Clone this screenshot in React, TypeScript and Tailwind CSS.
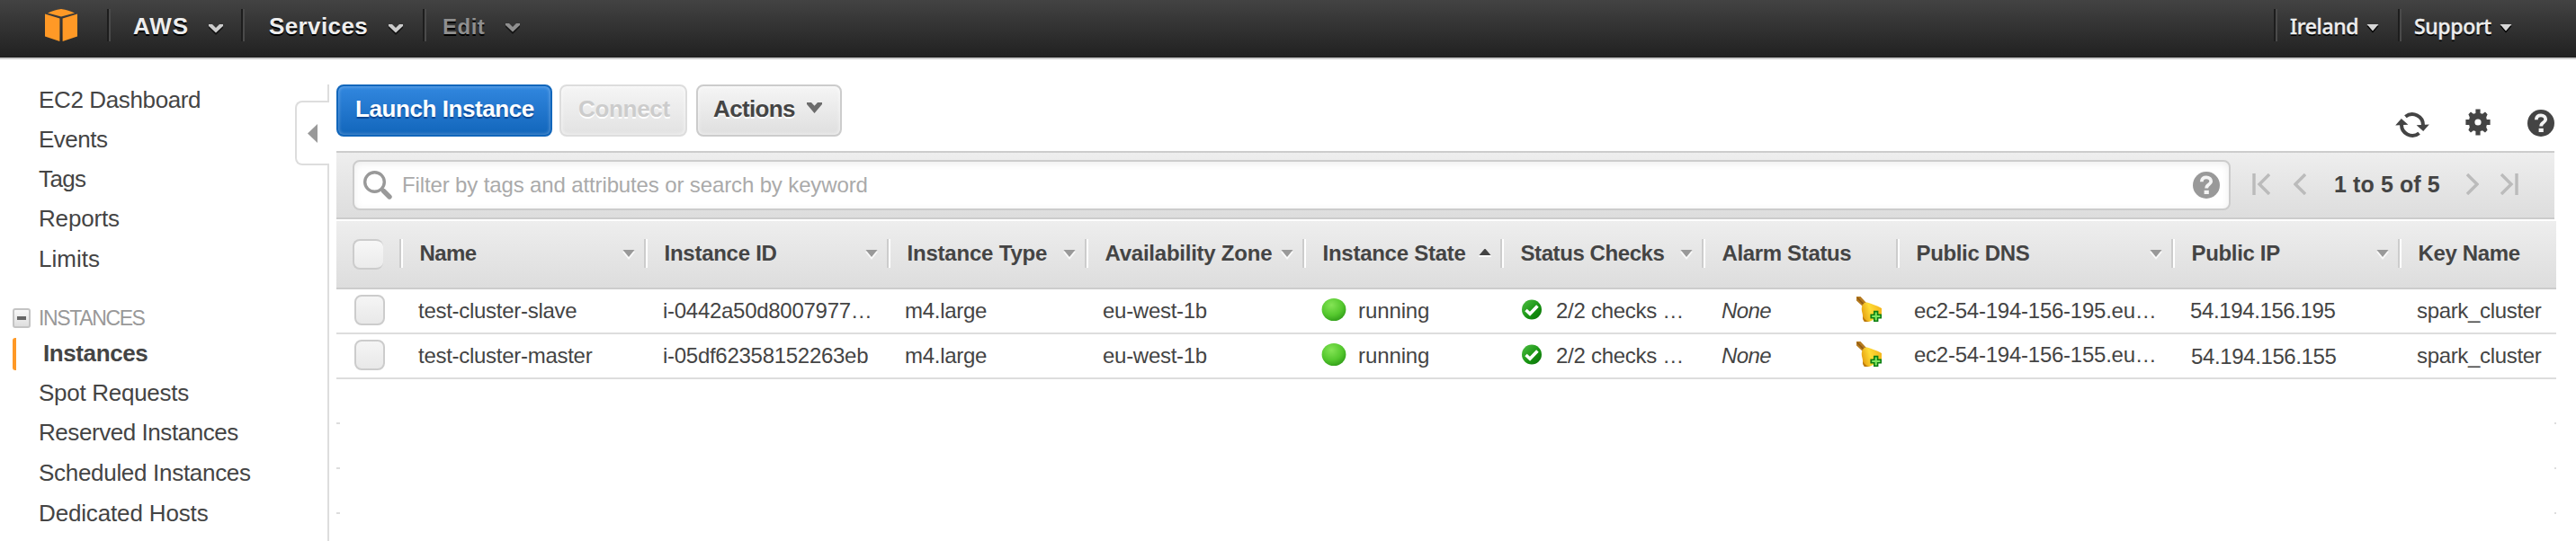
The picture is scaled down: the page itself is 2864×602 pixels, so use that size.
import type { ReactNode } from "react";

type Column = {
  label: string;
  width: string;
  tracking: string;
  sort?: "down" | "up";
};

const columns: Column[] = [
  { label: "Name", width: "w-[272px]", tracking: "tracking-[-0.6px]", sort: "down" },
  { label: "Instance ID", width: "w-[270px]", tracking: "tracking-[-0.26px]", sort: "down" },
  { label: "Instance Type", width: "w-[220px]", tracking: "tracking-[-0.2px]", sort: "down" },
  { label: "Availability Zone", width: "w-[242px]", tracking: "tracking-[-0.24px]", sort: "down" },
  { label: "Instance State", width: "w-[220px]", tracking: "tracking-[-0.26px]", sort: "up" },
  { label: "Status Checks", width: "w-[224px]", tracking: "tracking-[-0.42px]", sort: "down" },
  { label: "Alarm Status", width: "w-[216px]", tracking: "tracking-[-0.35px]" },
  { label: "Public DNS", width: "w-[306px]", tracking: "tracking-[-0.35px]", sort: "down" },
  { label: "Public IP", width: "w-[252px]", tracking: "tracking-[-0.33px]", sort: "down" },
  { label: "Key Name", width: "w-[176px]", tracking: "tracking-[-0.36px]" },
];

const instances = [
  {
    name: "test-cluster-slave",
    id: "i-0442a50d8007977…",
    dns: "ec2-54-194-156-195.eu…",
    ip: "54.194.156.195",
    keyName: "spark_cluster",
    dnsPad: "pb-0",
    ipPad: "pt-0 pl-[21px]",
  },
  {
    name: "test-cluster-master",
    id: "i-05df62358152263eb",
    dns: "ec2-54-194-156-155.eu…",
    ip: "54.194.156.155",
    keyName: "spark_cluster",
    dnsPad: "pb-[2px]",
    ipPad: "pt-[2px] pl-[22px]",
  },
];

function Logo() {
  return (
    <svg width="36" height="36" viewBox="0 0 36 36" fill="#ff9926">
      <path d="M3 4.4 C8 2.4 12 .6 18 0 C24 .6 28 2.4 33 4.4 L18 8.6 Z" />
      <path d="M0 5.6 L16.4 10.6 V36 L0 30.6 Z" />
      <path d="M36 5.6 L19.6 10.6 V36 L36 30.6 Z" />
    </svg>
  );
}

function Chevron({ color }: { color: string }) {
  return (
    <svg width="16" height="12" viewBox="0 0 16 12">
      <path d="M0 2 H4 L8 6 L12 2 H16 V4 L8 12 L0 4 Z" fill="#000" opacity=".6" />
      <path d="M0 0 H4 L8 4 L12 0 H16 V2 L8 9.5 L0 2 Z" fill={color} />
    </svg>
  );
}

function NavDivider() {
  return <div className="mt-[10px] h-9 w-1 shrink-0 border-l-2 border-r-2 border-l-[#1d1d1d] border-r-[#4a4a4a]" />;
}

function Caret() {
  return (
    <svg width="14" height="10" viewBox="0 0 14 10">
      <path d="M0.5 2 H13.5 L7 9.5 Z" fill="#000" />
      <path d="M0.5 0 H13.5 L7 7.5 Z" fill="#d6d6d6" />
    </svg>
  );
}

function TopBar() {
  return (
    <header className="flex h-[66px] items-start border-b-2 border-[#ccc] bg-linear-to-b from-[#434343] to-[#212121] font-['Liberation_Sans',Arial,sans-serif] text-[26px] leading-[38px] font-bold text-[#eee]">
      <div className="ml-[50px] mt-[10px]"><Logo /></div>
      <div className="ml-[33px]"><NavDivider /></div>
      <span className="ml-[25px] mt-[10px] w-[63px] whitespace-nowrap tracking-[0.9px] [text-shadow:0_2px_0_#000]">AWS</span>
      <div className="ml-[21px] mt-[27px]"><Chevron color="#ccc" /></div>
      <div className="ml-[20px]"><NavDivider /></div>
      <span className="ml-[27px] mt-[10px] w-[112px] whitespace-nowrap tracking-[0.4px] [text-shadow:0_2px_0_#000]">Services</span>
      <div className="ml-[21px] mt-[27px]"><Chevron color="#ccc" /></div>
      <div className="ml-[22px]"><NavDivider /></div>
      <span className="ml-[18px] mt-[11px] w-[49px] whitespace-nowrap text-[24px] tracking-[0.5px] text-[#8f8f8f] [text-shadow:0_2px_0_#000]">Edit</span>
      <div className="ml-[21px] mt-[26px]"><Chevron color="#8f8f8f" /></div>
      <div className="flex-1" />
      <div><NavDivider /></div>
      <div className="flex h-[64px] w-[134px] items-start pl-[14px] font-['Noto_Sans',sans-serif] text-[23px] font-medium">
        <span className="mt-[10px] w-[85px] whitespace-nowrap tracking-[-0.35px] [-webkit-text-stroke:0.4px_#eee] [text-shadow:0_2px_0_#000]">Ireland</span>
        <div className="mt-[27px]"><Caret /></div>
      </div>
      <NavDivider />
      <div className="flex h-[64px] w-[194px] items-start pl-[14px] font-['Noto_Sans',sans-serif] text-[23px] font-medium">
        <span className="mt-[10px] w-[95px] whitespace-nowrap tracking-[-0.35px] [-webkit-text-stroke:0.4px_#eee] [text-shadow:0_2px_0_#000]">Support</span>
        <div className="mt-[27px]"><Caret /></div>
      </div>
    </header>
  );
}

function NavItem({ tracking, height = "h-11", children }: { tracking: string; height?: string; children: ReactNode }) {
  return <a className={`flex items-center whitespace-nowrap pl-[43px] ${height} ${tracking}`}>{children}</a>;
}

function Sidebar() {
  return (
    <aside className="flex w-[374px] shrink-0 font-['Liberation_Sans',Arial,sans-serif] text-[26px] leading-[30px] text-[#444]">
      <nav className="w-[328px] pt-[23px]">
        <NavItem tracking="tracking-[-0.37px]">EC2 Dashboard</NavItem>
        <NavItem tracking="tracking-[-0.5px]">Events</NavItem>
        <NavItem tracking="tracking-[-0.6px]">Tags</NavItem>
        <NavItem tracking="tracking-[-0.17px]">Reports</NavItem>
        <NavItem tracking="tracking-[0px]" height="h-[46px]">Limits</NavItem>
        <div className="mt-[21px] flex h-11 items-center whitespace-nowrap pl-[14px] text-[23px] tracking-[-1.37px] text-[#999]">
          <span className="mr-[9px] flex h-[22px] w-5 items-center justify-center rounded-[3px] border-2 border-[#c4c4c4] bg-linear-to-b from-[#f8f8f8] to-[#dedede]">
            <span className="h-1 w-[10px] bg-[#666]" />
          </span>
          INSTANCES
        </div>
        <div className="flex h-9 pl-[14px]">
          <span className="w-1 rounded-l-[3px] bg-[#ff9926]" />
          <span className="pl-[30px] font-bold leading-[34px] tracking-[-0.4px]">Instances</span>
        </div>
        <div className="h-[3px]" />
        <NavItem tracking="tracking-[-0.28px]">Spot Requests</NavItem>
        <NavItem tracking="tracking-[-0.44px]">Reserved Instances</NavItem>
        <NavItem tracking="tracking-[-0.3px]" height="h-[46px]">Scheduled Instances</NavItem>
        <NavItem tracking="tracking-[-0.15px]">Dedicated Hosts</NavItem>
      </nav>
      <div className="flex w-[38px] flex-col pt-[28px]">
        <span className="h-[18px] w-[2px] self-end bg-[#ddd]" />
        <div className="flex h-[72px] items-center rounded-l-[8px] border-2 border-r-0 border-[#ddd] pl-[12px]">
          <svg width="11" height="21" viewBox="0 0 11 21"><path d="M11 0 V21 L0 10.5 Z" fill="#999" /></svg>
        </div>
        <span className="w-[2px] flex-1 self-end bg-[#ddd]" />
      </div>
    </aside>
  );
}

function RefreshIcon() {
  return (
    <svg width="38" height="30" viewBox="-19 -15 38 30">
      <path d="M-7.6 -9.2 A12 12 0 0 1 11.9 1" fill="none" stroke="#444" strokeWidth="4" />
      <path d="M4.6 .2 L18.8 -.4 L12.2 7 Z" fill="#444" />
      <path d="M7.6 9.2 A12 12 0 0 1 -11.9 -1" fill="none" stroke="#444" strokeWidth="4" />
      <path d="M-4.6 -.2 L-18.8 .4 L-12.2 -7 Z" fill="#444" />
    </svg>
  );
}

function GearIcon() {
  return (
    <svg width="28" height="30" viewBox="-14 -15 28 30" fill="#444">
      <path
        fillRule="evenodd"
        d="M-2.6 -14.5 H2.6 V-10 L5 -9.2 L8 -11.4 L10.6 -8.8 L9.2 -5.4 L9.8 -3 H13.6 V3 H9.8 L9.2 5.4 L10.6 8.8 L8 11.4 L5 9.2 L2.6 10 V14.5 H-2.6 V10 L-5 9.2 L-8 11.4 L-10.6 8.8 L-9.2 5.4 L-9.8 3 H-13.6 V-3 H-9.8 L-9.2 -5.4 L-10.6 -8.8 L-8 -11.4 L-5 -9.2 L-2.6 -10 Z M0 -3.6 A3.6 3.6 0 1 0 0 3.6 A3.6 3.6 0 1 0 0 -3.6 Z"
      />
    </svg>
  );
}

function HelpIcon({ color }: { color: string }) {
  return (
    <svg width="30" height="30" viewBox="0 0 30 30">
      <circle cx="15" cy="15" r="15" fill={color} />
      <path d="M9.8 11.2 C9.8 7.6 12 6.4 15 6.4 C18.2 6.4 20.2 8.2 20.2 10.8 C20.2 14.6 15.2 14 15.2 18.4" fill="none" stroke="#f4f4f4" strokeWidth="3.8" />
      <rect x="12.6" y="20.8" width="5.2" height="4.2" fill="#f4f4f4" />
    </svg>
  );
}

function Actions() {
  return (
    <div className="flex h-[102px] items-start pt-[28px] font-['Liberation_Sans',Arial,sans-serif] text-[26px] leading-[30px] font-bold">
      <button className="h-[58px] w-[240px] whitespace-nowrap rounded-[8px] border-2 border-[#1166bb] bg-linear-to-b from-[#3187df] to-[#1166bb] pb-1 pl-[19px] text-left tracking-[-0.42px] text-white shadow-[inset_0_0_4px_rgba(255,255,255,0.4)] [text-shadow:0_2px_1px_rgba(0,40,110,0.6)]">
        Launch Instance
      </button>
      <button className="ml-2 h-[58px] w-[142px] whitespace-nowrap rounded-[8px] border-2 border-[#ddd] bg-linear-to-b from-[#f5f5f5] to-[#e2e2e2] pb-1 pl-[19px] text-left tracking-[-0.31px] text-[#ccc] shadow-[inset_0_0_4px_rgba(255,255,255,0.8)] [text-shadow:0_2px_0_#fff]">
        Connect
      </button>
      <button className="ml-[10px] flex h-[58px] w-[162px] items-center whitespace-nowrap rounded-[8px] border-2 border-[#ccc] bg-linear-to-b from-[#f5f5f5] to-[#dfdfdf] pb-1 pl-[17px] tracking-[-0.65px] text-[#444] shadow-[inset_0_0_4px_rgba(255,255,255,0.8)] [text-shadow:0_2px_0_#fff]">
        <span className="w-[104px] text-left">Actions</span>
        <svg width="17" height="12" viewBox="0 0 17 12" className="mb-[2px]">
          <path d="M0 0 H5 L8.5 3.8 L12 0 H17 V2 L8.5 12 L0 2 Z" fill="#6c6c6c" />
        </svg>
      </button>
      <div className="ml-auto flex items-start pr-[24px]">
        <div className="mt-[30px]"><RefreshIcon /></div>
        <div className="ml-[40px] mt-[27px]"><GearIcon /></div>
        <div className="ml-[41px] mt-[28px]"><HelpIcon color="#444" /></div>
      </div>
    </div>
  );
}

function FilterBar() {
  return (
    <div className="flex h-[76px] w-[2466px] items-start border-y-2 border-[#ccc] bg-linear-to-b from-[#eee] to-[#ddd] font-['Liberation_Sans',Arial,sans-serif]">
      <div className="ml-[18px] mt-2 flex h-14 w-[2088px] items-center rounded-[8px] border-2 border-[#ccc] bg-white pl-[10px] pr-[10px] shadow-[inset_0_2px_8px_rgba(0,0,0,0.08)]">
        <svg width="32" height="32" viewBox="0 0 32 32" fill="none" stroke="#999">
          <circle cx="12.5" cy="12.5" r="10.8" strokeWidth="3.4" />
          <path d="M20 20 L23 23" strokeWidth="4" />
          <path d="M22.5 22.5 L29 29" strokeWidth="5.4" strokeLinecap="round" />
        </svg>
        <span className="ml-[11px] whitespace-nowrap text-[24px] leading-[28px] tracking-[-0.13px] text-[#aaa]">
          Filter by tags and attributes or search by keyword
        </span>
        <div className="ml-auto"><HelpIcon color="#999" /></div>
      </div>
      <div className="flex h-[72px] items-center pb-[2px] text-[#444]">
        <svg width="20" height="24" viewBox="0 0 20 24" className="ml-6" fill="none" stroke="#bbb" strokeWidth="3.4">
          <path d="M2 0 V24" /><path d="M19 1 L8 12 L19 23" />
        </svg>
        <svg width="14" height="24" viewBox="0 0 14 24" className="ml-[26px]" fill="none" stroke="#bbb" strokeWidth="3.4">
          <path d="M13 1 L2 12 L13 23" />
        </svg>
        <span className="ml-[31px] w-[147px] whitespace-nowrap text-[25px] leading-[28px] font-bold tracking-[0.1px]">1 to 5 of 5</span>
        <svg width="14" height="24" viewBox="0 0 14 24" fill="none" stroke="#bbb" strokeWidth="3.4">
          <path d="M1 1 L12 12 L1 23" />
        </svg>
        <svg width="20" height="24" viewBox="0 0 20 24" className="ml-[24px]" fill="none" stroke="#bbb" strokeWidth="3.4">
          <path d="M18 0 V24" /><path d="M1 1 L12 12 L1 23" />
        </svg>
      </div>
    </div>
  );
}

function SortArrow({ dir }: { dir: "down" | "up" }) {
  return dir === "down" ? (
    <svg width="14" height="12" viewBox="0 0 14 12">
      <path d="M0 2 H14 L7 11 Z" fill="#fafafa" />
      <path d="M.5 0 H13.5 L7 8 Z" fill="#999" />
    </svg>
  ) : (
    <svg width="14" height="12" viewBox="0 0 14 12">
      <path d="M0 8 L7 0 L14 8 V9 H0 Z" fill="#fafafa" />
      <path d="M.5 7 H13.5 L7 -.6 Z" fill="#444" />
    </svg>
  );
}

function HeaderRow() {
  return (
    <div className="mt-[2px] flex h-[76px] w-[2468px] items-start border-b-2 border-[#ccc] bg-linear-to-b from-[#eee] to-[#ddd] pt-5 text-[24px] leading-[32px] font-bold">
      <div className="w-[70px] pl-[18px]">
        <div className="h-[34px] w-[34px] rounded-[8px] border-2 border-r-0 border-[#ccc] bg-linear-to-b from-[#f7f7f7] to-[#ebebeb]" />
      </div>
      {columns.map((c) => (
        <div key={c.label} className={`flex shrink-0 items-start ${c.width}`}>
          <span className="h-8 w-1 border-l-2 border-r-2 border-l-[#ccc] border-r-white" />
          <span className={`whitespace-nowrap pl-[18.5px] ${c.tracking}`}>{c.label}</span>
          {c.sort && (
            <span className={c.sort === "up" ? "ml-auto mr-[10px] mt-[11px]" : "ml-auto mr-[10px] mt-[12px]"}>
              <SortArrow dir={c.sort} />
            </span>
          )}
        </div>
      ))}
    </div>
  );
}

function RunningDot() {
  return (
    <svg width="28" height="28" viewBox="0 0 28 28">
      <defs>
        <radialGradient id="dot" cx=".4" cy=".3" r=".75">
          <stop offset="0" stopColor="#84e455" />
          <stop offset=".6" stopColor="#55c82e" />
          <stop offset="1" stopColor="#2f9c18" />
        </radialGradient>
      </defs>
      <ellipse cx="14" cy="13.5" rx="13.4" ry="12.6" fill="url(#dot)" />
    </svg>
  );
}

function CheckIcon() {
  return (
    <svg width="24" height="24" viewBox="0 0 24 24">
      <defs>
        <linearGradient id="chk" x1="0" y1="0" x2="1" y2="1">
          <stop offset="0" stopColor="#4fbf45" />
          <stop offset=".6" stopColor="#15910f" />
          <stop offset="1" stopColor="#0c6e0a" />
        </linearGradient>
      </defs>
      <circle cx="12" cy="11.5" r="11" fill="url(#chk)" />
      <path d="M5.5 12 L10 16.2 L18.4 7.6" fill="none" stroke="#fff" strokeWidth="3.6" />
    </svg>
  );
}

function AlarmBell() {
  return (
    <svg width="28" height="28" viewBox="0 0 28 28">
      <defs>
        <linearGradient id="bell" x1="0" y1=".6" x2="1" y2=".3">
          <stop offset="0" stopColor="#e59f10" />
          <stop offset=".45" stopColor="#ffdb35" />
          <stop offset="1" stopColor="#f4b51c" />
        </linearGradient>
      </defs>
      <path d="M0 0 H4.5 L11 7 L7 11 L0 4.5 Z" fill="#b57a1e" />
      <path d="M1 1.2 L8 8.6" stroke="#8f5a14" strokeWidth="1.6" />
      <path d="M6.5 10 C7.5 7.5 9.5 6.4 12 6.6 C17 8.6 22 9.6 28 13 V22 L14 28 H9 C6.4 25 7.6 22 6.4 18 C5.6 15 5.4 12.6 6.5 10 Z" fill="url(#bell)" />
      <path d="M7.2 22 C8.6 25 10.5 26.6 13.6 28 H9 C7.2 26 6.8 24 7.2 22 Z" fill="#b9780f" />
      <path d="M19 15.8 H24.4 V19.4 H28 V24.6 H24.4 V28 H19 V24.6 H15.4 V19.4 H19 Z" fill="#0b7d12" />
      <path d="M20.6 17.6 H22.8 V21 H26.4 V23 H22.8 V26.6 H20.6 V23 H17.2 V21 H20.6 Z" fill="#7fe65f" />
    </svg>
  );
}

function InstanceRow({ row }: { row: (typeof instances)[number] }) {
  const cell = "flex h-12 shrink-0 items-center whitespace-nowrap";
  return (
    <div className="flex h-[50px] w-[2468px] border-b-2 border-[#ddd] text-[24px] leading-[28px] tracking-[-0.28px]">
      <div className="w-[70px] shrink-0 pl-5 pt-[6px]">
        <div className="h-[34px] w-[34px] rounded-[8px] border-2 border-[#ccc] bg-linear-to-b from-[#f5f5f5] to-[#e8e8e8]" />
      </div>
      <div className={`${cell} w-[272px] pl-[21px]`}>{row.name}</div>
      <div className={`${cell} w-[270px] pl-[21px]`}>{row.id}</div>
      <div className={`${cell} w-[220px] pl-5`}>m4.large</div>
      <div className={`${cell} w-[242px] pl-5`}>eu-west-1b</div>
      <div className={`${cell} w-[220px] pl-[21px] tracking-[-0.1px]`}>
        <span className="mb-[3px]"><RunningDot /></span>
        <span className="ml-[13px]">running</span>
      </div>
      <div className={`${cell} w-[224px] pl-[23px]`}>
        <span className="mb-[3px]"><CheckIcon /></span>
        <span className="ml-[15px]">2/2 checks …</span>
      </div>
      <div className={`${cell} w-[216px] pl-[22px]`}>
        <em className="tracking-[-0.6px]">None</em>
        <span className="ml-auto mr-[16px] mb-[4px]"><AlarmBell /></span>
      </div>
      <div className={`${cell} w-[306px] pl-5 tracking-[-0.24px] ${row.dnsPad}`}>{row.dns}</div>
      <div className={`${cell} w-[252px] tracking-[-0.38px] ${row.ipPad}`}>{row.ip}</div>
      <div className={`${cell} w-[176px] pl-[21px] tracking-[-0.33px]`}>{row.keyName}</div>
    </div>
  );
}

function EmptyRow() {
  return (
    <div className="flex h-[50px] w-[2468px] items-end justify-between">
      <span className="h-[2px] w-1 bg-[#ddd]" />
      <span className="h-[2px] w-[2px] bg-[#ddd]" />
    </div>
  );
}

export default function App() {
  return (
    <div className="flex h-[602px] w-[2864px] flex-col overflow-hidden bg-white">
      <TopBar />
      <div className="flex min-h-0 flex-1">
        <Sidebar />
        <main className="flex-1">
          <Actions />
          <FilterBar />
          <section className="font-['Liberation_Sans',Arial,sans-serif] text-[#444]">
            <HeaderRow />
            {instances.map((row) => (
              <InstanceRow key={row.name} row={row} />
            ))}
            <EmptyRow />
            <EmptyRow />
            <EmptyRow />
          </section>
        </main>
      </div>
    </div>
  );
}
